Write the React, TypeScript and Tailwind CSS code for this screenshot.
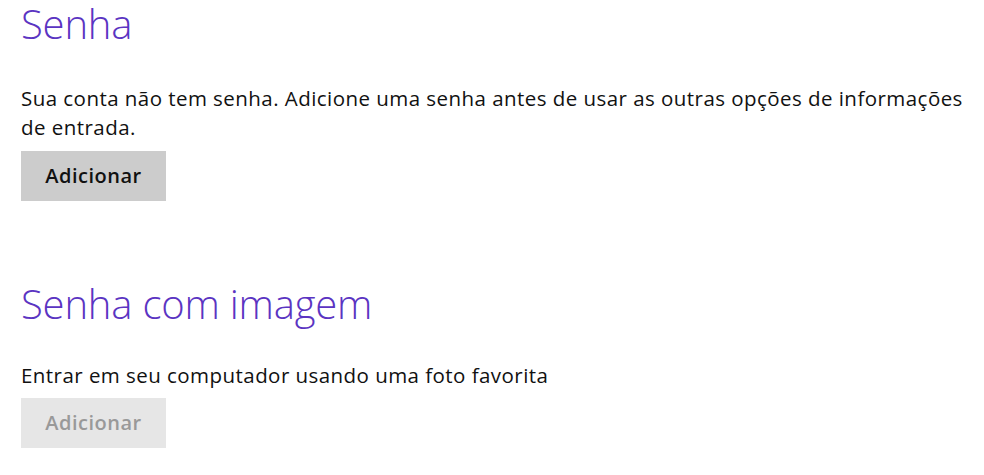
export default function App() {
  const font = { fontFamily: '"Segoe UI", "Open Sans", "Noto Sans", sans-serif' };
  return (
    <div className="w-[984px] h-[475px] bg-white overflow-hidden pl-[21px]" style={font}>
      <h1 className="text-[40px] leading-[48px] font-light text-[#5b34c2] tracking-[-0.2px]">Senha</h1>
      <p className="mt-[36px] w-[955px] text-[20.5px] leading-[29px] tracking-[0.45px] text-[#111]">
        Sua conta não tem senha. Adicione uma senha antes de usar as outras opções de informações de entrada.
      </p>
      <button className="mt-[9px] w-[145px] h-[50px] bg-[#cccccc] text-[20px] font-semibold tracking-[0.5px] text-[#111]">
        Adicionar
      </button>
      <h2 className="mt-[79px] text-[40px] leading-[48px] font-light text-[#5b34c2] tracking-[-0.2px]">Senha com imagem</h2>
      <p className="mt-[33px] text-[20.5px] leading-[29px] tracking-[0.45px] text-[#111]">Entrar em seu computador usando uma foto favorita</p>
      <button className="mt-[8px] w-[145px] h-[50px] bg-[#e6e6e6] text-[20px] font-semibold tracking-[0.5px] text-[#999]">
        Adicionar
      </button>
    </div>
  );
}
